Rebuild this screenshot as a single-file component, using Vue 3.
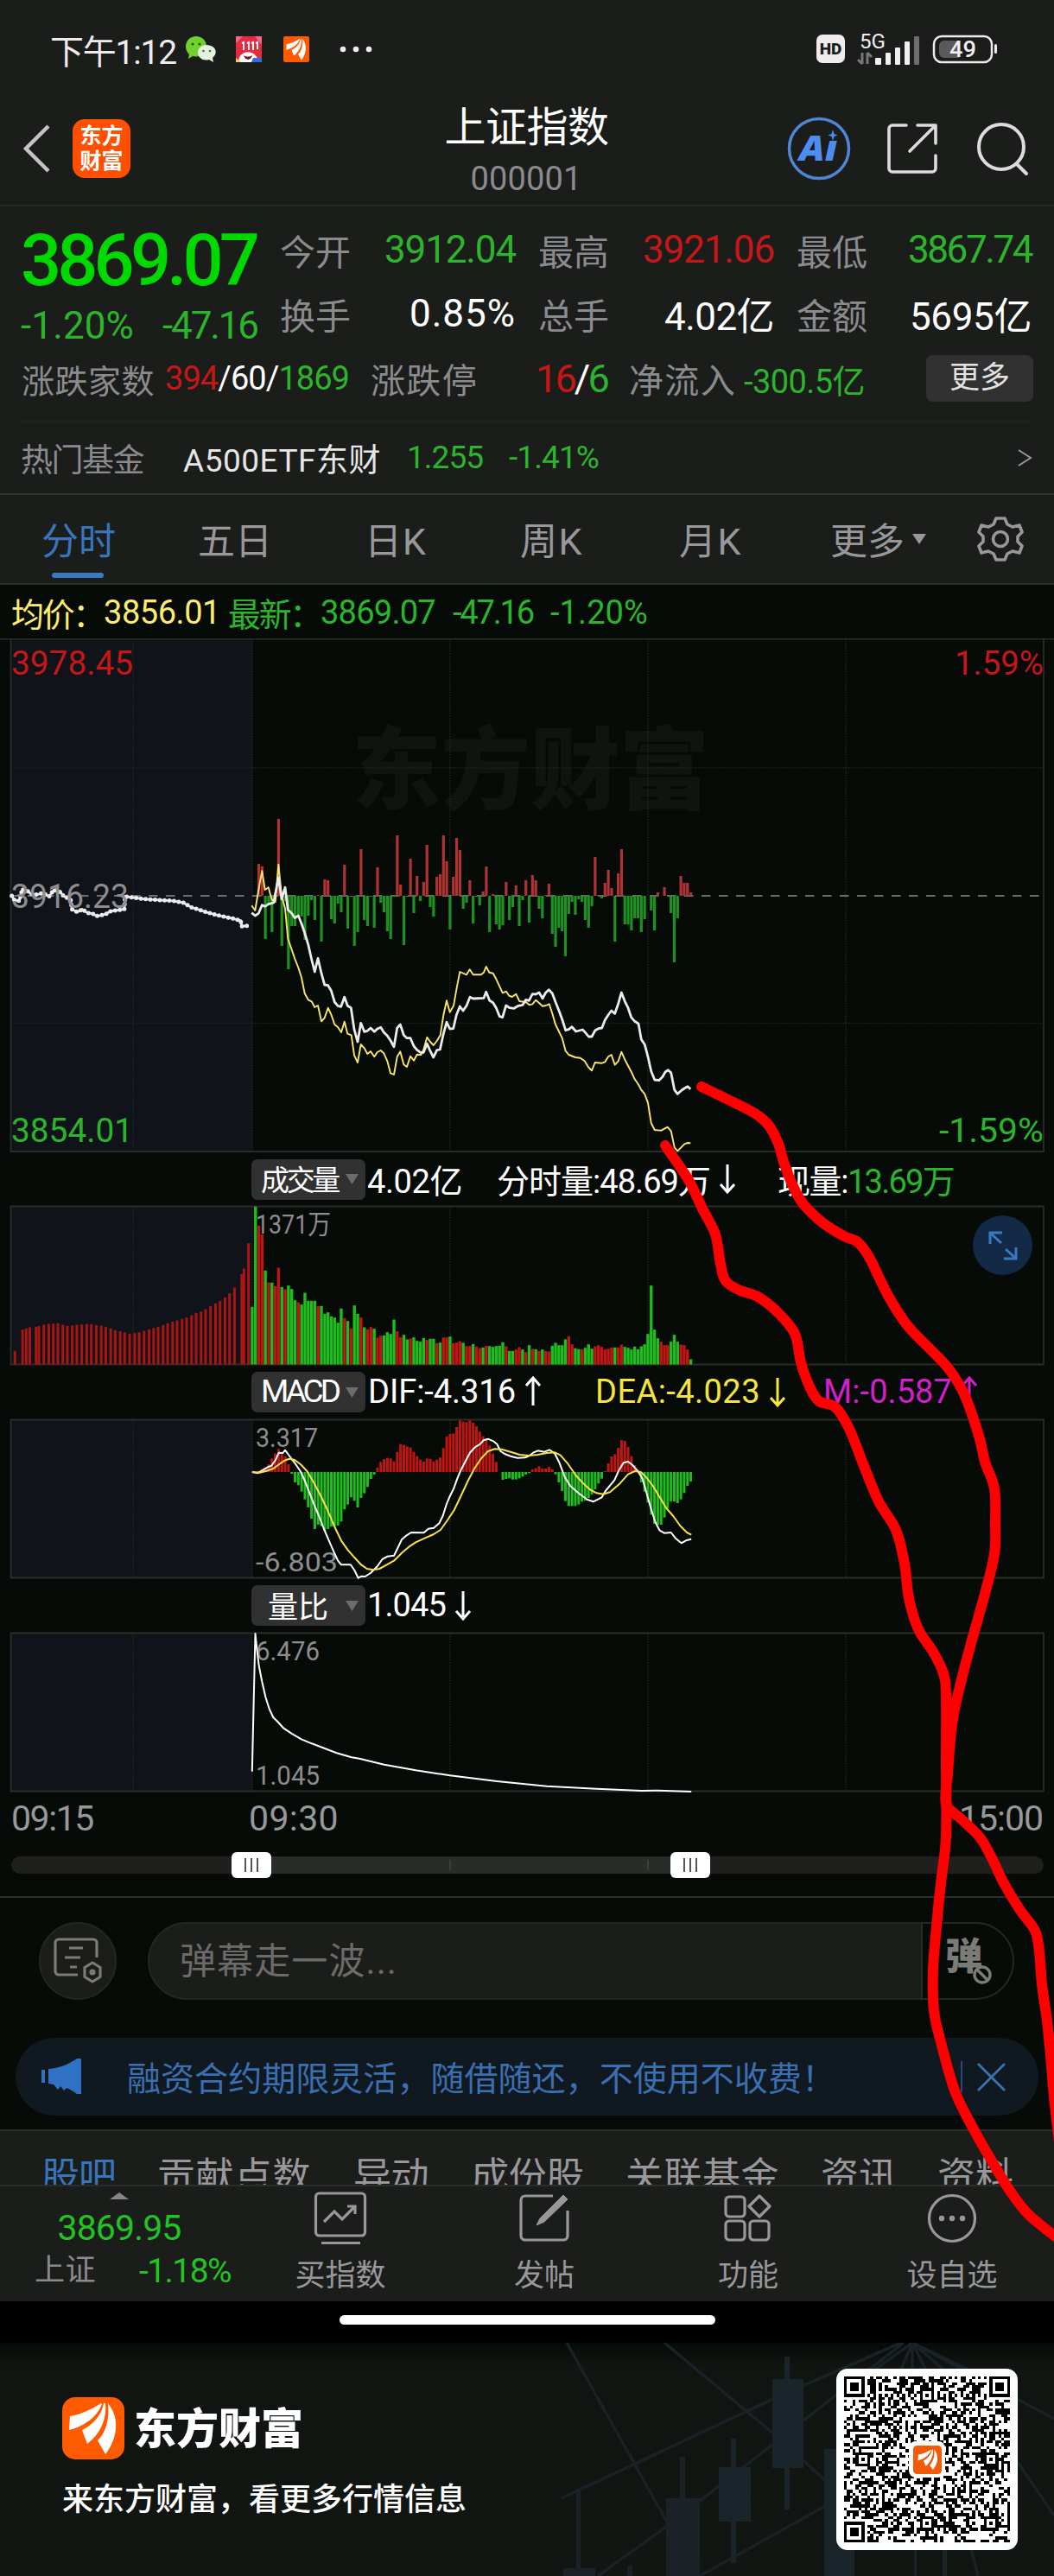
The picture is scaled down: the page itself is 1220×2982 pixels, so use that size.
<script setup>
const vFit = {
  mounted(el, { value }) {
    const width = el.getBoundingClientRect().width
    const count = [...el.textContent.trim()].length
    el.style.letterSpacing = `${(value - width) / count}px`
  },
}

const STEP = 3.817
const OPEN_X = 292
const minuteX = (i) => OPEN_X + i * STEP

const parse = (s) => s.trim().split(/\s+/).map((p) => p.split(',').map(Number))
const place = (s, sx, sy, ox, oy) =>
  parse(s).map(([x, y]) => `${(x * sx + ox).toFixed(1)},${(y * sy + oy).toFixed(1)}`).join(' ')

// Smooth path through a list of points (Catmull-Rom to Bezier)
function smooth(s) {
  const p = parse(s)
  let d = `M${p[0][0]} ${p[0][1]}`
  for (let i = 0; i < p.length - 1; i++) {
    const a = p[i - 1] || p[i]
    const b = p[i]
    const c = p[i + 1]
    const e = p[i + 2] || c
    d += `C${b[0] + (c[0] - a[0]) / 6} ${b[1] + (c[1] - a[1]) / 6} ${c[0] - (e[0] - b[0]) / 6} ${c[1] - (e[1] - b[1]) / 6} ${c[0]} ${c[1]}`
  }
  return d
}

const flow = [
  0, 0, 37, 34, -50, -9, -42, -5, 89, -58, -6, -85, -35, -35, -24, -24, -51, -23, -5, -28,
  1, -53, 19, 18, -27, -32, -9, -19, 36, -38, -1, -58, -42, 54, -28, -35, -1, -37, 33, -8,
  -19, -41, -50, -1, 70, 13, -57, -1, 43, -20, 23, -6, 16, 59, -13, -24, 22, 25, 70, 40,
  -39, 22, 67, 53, -15, -8, 18, -32, -1, -11, 5, 34, -42, 2, -33, -39, -34, 16, -28, -13,
  12, -35, -5, 18, -31, 24, 18, -15, -26, 1, 14, -44, -59, -37, -41, -70, -21, -7, -22, -4,
  -7, -28, -37, -12, 45, 1, -3, 15, 30, 9, -53, 26, 54, -33, -33, -40, -26, -26, -42, -27,
  0, -17, -40, 4, 0, 10, 0, -20, -77, -26, 23, 15, 15, 4,
]

const preLine = place(
  '35,848 43,860 58,862 66,830 80,833 90,842 110,845 128,840 146,850 160,832 180,838 190,850 210,858 214,885 230,893 245,885 260,895 275,897 287,904 300,902 315,898 330,890 345,888 370,885 372,850 390,852 430,857 480,860 515,862 545,867 570,880 615,893 650,902 690,910 716,916 719,932 740,930',
  0.389, 0.4209, 0, 680)
const T = 1 / 3
const priceLine = place(
  '34,230 46,240 58,232 70,203 80,208 92,200 110,195 127,108 138,182 150,142 160,220 172,230 184,248 196,240 208,270 218,300 230,340 242,392 253,435 264,388 276,440 287,480 299,482 310,500 322,540 333,553 344,556 356,523 367,553 379,560 390,635 402,678 413,613 425,643 436,640 447,630 460,643 470,633 482,628 493,645 505,657 517,675 528,695 539,630 550,618 562,655 573,665 585,665 597,693 608,706 620,715 631,715 643,685 654,710 665,732 677,707 688,705 700,650 711,610 722,633 734,632 745,585 757,555 768,570 780,553 792,523 803,528 840,526',
  T, T, 280, 980) + ' ' + place(
  '68,625 80,655 92,662 103,680 115,710 125,713 137,672 150,680 165,682 180,673 195,670 206,652 217,655 229,632 240,633 252,627 264,647 275,627 286,617 298,630 309,660 321,690 332,720 344,758 355,755 366,746 380,762 403,756 412,765 424,780 435,780 447,758 458,752 470,750 481,722 492,705 503,690 515,700 527,665 538,627 550,658 561,680 572,713 584,727 597,735 607,790 619,808 630,850 641,900 653,930 668,932 680,920 690,903 700,896 710,905 722,965 733,979 745,968 756,960 768,953 778,962',
  T, T, 540, 940)
const avgLine = place(
  '34,205 46,222 58,150 70,85 80,150 92,142 104,185 116,192 127,62 138,170 150,215 160,320 172,355 184,390 196,420 207,455 218,510 230,532 242,538 253,558 264,552 276,607 287,595 299,560 310,583 322,618 333,627 345,645 356,608 367,650 380,655 390,725 402,750 413,687 425,700 436,720 447,711 460,730 470,714 482,708 493,718 505,745 516,787 528,792 539,730 550,712 562,757 573,765 585,728 597,743 608,722 622,723 631,705 643,662 654,678 665,690 677,675 689,655 700,585 711,535 722,575 735,553 746,490 757,435 780,445 791,427 803,445 830,445 840,437',
  T, T, 280, 980) + ' ' + place(
  '68,537 79,557 92,560 103,580 125,628 138,623 148,638 158,642 172,632 184,657 206,660 218,670 229,667 241,653 252,663 264,674 276,672 287,667 298,700 309,738 332,785 344,830 355,843 378,852 395,854 410,865 424,887 435,898 446,870 470,872 481,868 492,850 503,843 515,878 527,865 538,833 550,860 572,902 584,928 596,945 607,965 619,980 630,1010 641,1080 653,1104 676,1106 698,1094 710,1108 722,1165 733,1177 745,1165 757,1153 768,1149 778,1150',
  T, T, 540, 940)

const preVolume = parse(
  '33,703 50,628 58,624 66,620 80,618 86,616 97,611 108,608 118,607 128,606 139,611 149,615 160,614 170,611 181,610 192,609 202,609 213,612 224,615 234,618 245,624 255,630 266,634 276,638 287,642 298,640 308,637 319,632 330,627 340,622 350,618 361,612 371,606 382,600 392,596 403,591 413,586 424,578 434,570 445,565 455,557 466,547 477,537 487,528 498,516 508,502 519,482 535,435 540,416 550,328',
).map(([x, y]) => ({ x: x * 0.523, h: (749 - y) / 3 }))

const volume = `549g 201g 267r 297r 423g 464r 465g 477r 413r 480g 488r 475g 487g 526g 533r 541g 500g 528g 528g 528g
547r 546g 573g 568g 582g 586g 604g 555g 588r 598g 624r 544g 573g 586r 620g 627r 619r 625g 656r 649r
648g 637g 643g 593g 634r 655r 646g 662g 659r 655g 667g 670g 657g 664r 660g 660g 675r 673g 655r 655r
652g 675r 673r 668r 674g 685r 685r 678g 687r 692r 690g 684r 685g 688g 685g 684g 672g 686r 702g 702g
697r 689r 697g 706r 682g 695r 696g 702r 697g 702r 704r 684g 674g 682g 682g 662g 651r 679r 693g 696g
696r 691g 679g 694g 686r 682r 688r 697r 694r 690r 690g 690r 680r 688g 691g 697g 687g 696g 686g 679g
643g 475g 628g 658g 670r 682r 682r 670g 646g 670g 680r 682r 697r 731g`
  .split(/\s+/)
  .map((v) => ({ h: (749 - parseInt(v)) / 3, up: v.endsWith('r') }))

const macd = `1122 1121 1118 1112 1105 1095 1075 1058 1042 1055 1068 1095 1128 1158 1168 1190 1217 1245 1284 1320
1305 1310 1325 1320 1312 1310 1308 1294 1252 1235 1210 1222 1245 1212 1196 1174 1146 1131 1107 1087
1077 1073 1075 1085 1052 1025 1028 1033 1037 1052 1067 1079 1086 1075 1076 1086 1079 1072 1039 999
990 988 966 943 947 949 943 951 963 982 998 1010 1030 1058 1087 1122 1149 1146 1144 1148
1148 1144 1138 1131 1126 1113 1109 1102 1109 1110 1104 1112 1130 1158 1188 1223 1240 1240 1240 1235
1225 1222 1212 1200 1182 1162 1145 1119 1092 1068 1060 1038 1011 1014 1035 1067 1098 1115 1158 1190
1228 1270 1302 1305 1305 1280 1248 1225 1225 1230 1217 1195 1170 1155`
  .split(/\s+/)
  .map((v) => (1122 - v) / 3)

const difLine = place(
  '558,1122 570,1126 580,1117 593,1105 601,1100 610,1080 617,1055 626,1056 631,1046 640,1065 652,1090 665,1120 674,1150 684,1190 695,1235 706,1275 717,1320 728,1360 739,1400 748,1430 755,1444 776,1444 784,1462 793,1490 800,1484 808,1485 820,1473 835,1450 846,1425 858,1415 872,1412 882,1380 889,1357 900,1342 910,1332 938,1333 948,1319 960,1316 972,1300 980,1275 988,1235 996,1205 1004,1180 1012,1145 1020,1115 1030,1085 1040,1055 1052,1035 1063,1025 1070,1012 1080,1007 1092,1015 1100,1025 1108,1050 1118,1060 1130,1067 1145,1073 1162,1072 1172,1065 1180,1055 1190,1048 1205,1052 1216,1045 1228,1058 1238,1090 1250,1140 1262,1170 1280,1195 1300,1218 1313,1225 1332,1210 1340,1188 1360,1150 1370,1115 1380,1090 1390,1086 1400,1098 1412,1120 1422,1145 1432,1200 1440,1245 1450,1295 1460,1325 1470,1334 1485,1332 1495,1352 1508,1369 1518,1360 1530,1355',
  0.523, T, 0, 1330)
const deaLine = place(
  '558,1122 575,1124 590,1118 605,1110 618,1095 630,1082 640,1076 652,1080 665,1095 680,1120 695,1160 710,1205 725,1255 740,1310 755,1360 770,1393 785,1420 800,1445 812,1458 826,1462 840,1458 855,1445 872,1430 890,1402 905,1382 920,1366 940,1352 960,1338 975,1323 990,1290 1005,1255 1020,1205 1035,1155 1050,1110 1065,1075 1080,1050 1095,1042 1110,1043 1130,1052 1150,1062 1170,1065 1190,1062 1210,1056 1228,1054 1240,1063 1255,1090 1275,1135 1290,1160 1305,1182 1320,1195 1335,1199 1350,1192 1370,1165 1390,1130 1405,1119 1418,1122 1430,1140 1445,1170 1460,1210 1475,1248 1490,1275 1505,1308 1520,1332 1530,1340',
  0.523, T, 0, 1330)
const ratioLine = place(
  '558,692 565,213 568,260 573,325 580,380 588,435 596,475 605,505 615,520 628,542 645,560 667,580 690,595 715,610 745,628 778,643 795,647 850,668 920,688 996,706 1100,726 1210,743 1320,752 1420,759 1450,758 1530,762',
  0.523, T, 0, 1820)

const gridX = [154, 292, 521, 750, 979]

const strokes = [
  '812,1258 843,1273 874,1289 890,1303 901,1324 907,1345 917,1371 930,1394 953,1416 977,1431 993,1438 1007,1457 1027,1498 1050,1534 1080,1565 1100,1587 1117,1616 1133,1662 1140,1692 1151,1723 1152,1764 1151,1799 1140,1845 1120,1917 1105,1978 1100,2014 1097,2054 1095,2088 1113,2106 1135,2128 1150,2155 1162,2180 1180,2210 1198,2235 1203,2260 1206,2297 1212,2340 1216,2380 1220,2427 1226,2480',
  '770,1326 797,1366 813,1399 828,1429 834,1463 840,1483 857,1494 877,1501 900,1519 920,1544 927,1577 937,1605 948,1622 967,1629 983,1654 1000,1697 1017,1738 1037,1771 1047,1810 1052,1850 1063,1886 1080,1912 1092,1937 1095,1963 1095,2040 1095,2126 1089,2180 1084,2230 1080,2280 1081,2327 1088,2360 1105,2420 1126,2463 1147,2500 1167,2533 1190,2563 1228,2594',
].map(smooth)

const quoteRows = [
  [
    { label: '今开', value: '3912.04', w: 152, tone: 'down' },
    { label: '最高', value: '3921.06', w: 152, tone: 'up' },
    { label: '最低', value: '3867.74', w: 143, tone: 'down' },
  ],
  [
    { label: '换手', value: '0.85%', w: 123, tone: 'plain' },
    { label: '总手', value: '4.02亿', w: 127, tone: 'plain' },
    { label: '金额', value: '5695亿', w: 141, tone: 'plain' },
  ],
]

const periods = [
  { text: '分时', x: 48, w: 86, on: true },
  { text: '五日', x: 229, w: 86 },
  { text: '日K', x: 422, w: 72 },
  { text: '周K', x: 602, w: 73 },
  { text: '月K', x: 786, w: 73 },
  { text: '更多', x: 961, w: 86 },
]
const gapBefore = (list, i) => list[i].x - (i ? list[i - 1].x + list[i - 1].w : 0)

const sections = [
  { text: '股吧', x: 48, w: 86, on: true },
  { text: '贡献点数', x: 182, w: 178 },
  { text: '异动', x: 409, w: 87 },
  { text: '成份股', x: 545, w: 131 },
  { text: '关联基金', x: 724, w: 178 },
  { text: '资讯', x: 950, w: 88 },
  { text: '资料', x: 1085, w: 88 },
]

const headVolume = [
  { text: '4.02亿', x: 425, w: 110 },
  { text: '分时量:48.69万', x: 575, w: 247, arrow: 'down' },
  { text: '现量:', x: 900, w: 81 },
  { text: '13.69万', x: 981, w: 123, tone: '#2cb52c' },
]
const headMacd = [
  { text: 'DIF:-4.316', x: 426, w: 171, arrow: 'up' },
  { text: 'DEA:-4.023', x: 689, w: 191, arrow: 'down', tone: '#f6e53c' },
  { text: 'M:-0.587', x: 953, w: 149, arrow: 'up', tone: '#d21fc9' },
]
const headRatio = [{ text: '1.045', x: 425, w: 91, arrow: 'down' }]
const headGap = (list, i) => {
  const prev = list[i - 1]
  return list[i].x - (prev ? prev.x + prev.w + (prev.arrow ? 30 : 0) : 423)
}

// QR symbol, 57 x 57 modules
const N = 57
const qr = (() => {
  let seed = 20251121
  const rnd = () => {
    seed = (seed * 1103515245 + 12345) % 2147483648
    return seed / 2147483648
  }
  const m = Array.from({ length: N }, () => Array.from({ length: N }, () => rnd() > 0.5))
  const ring = (cx, cy, r, keep) => {
    for (let y = -r; y <= r; y++)
      for (let x = -r; x <= r; x++) {
        const X = cx + x
        const Y = cy + y
        if (X < 0 || Y < 0 || X >= N || Y >= N) continue
        m[Y][X] = keep(Math.max(Math.abs(x), Math.abs(y)))
      }
  }
  for (let i = 8; i < N - 8; i++) m[6][i] = m[i][6] = i % 2 === 0
  for (const [x, y] of [[3, 3], [53, 3], [3, 53]]) ring(x, y, 4, (d) => d === 3 || d < 2)
  for (const [x, y] of [[28, 6], [6, 28], [50, 28], [28, 50], [50, 50]]) ring(x, y, 2, (d) => d !== 1)
  let d = ''
  m.forEach((row, y) => row.forEach((on, x) => { if (on) d += `M${x} ${y}h1v1h-1z` }))
  return d
})()
</script>

<template>
  <div class="page">
    <header class="status">
      <span class="clock" v-fit="146">下午1:12</span>
      <svg class="wechat" width="36" height="32" viewBox="0 0 36 32">
        <path d="M12 1C5 1 0 6 0 13c0 4 2 7 4 9l-1 5 5-3c8 2 16-3 16-11C24 6 19 1 12 1z" fill="#6fd32b" />
        <circle cx="8" cy="10" r="1.6" fill="#24570c" /><circle cx="16" cy="10" r="1.6" fill="#24570c" />
        <path d="M24 11c-6 0-10 4-10 9 0 6 6 10 13 8l5 3-1-5c8-7 2-15-7-15z" fill="#e4f3dd" />
        <circle cx="20.500" cy="18" r="1.300" fill="#476b3a" /><circle cx="28" cy="18" r="1.300" fill="#476b3a" />
      </svg>
      <svg class="mall" width="30" height="30" viewBox="0 0 30 30">
        <rect width="30" height="30" rx="3" fill="#e72a3e" />
        <path d="M0 8 8 0H0zM22 0l8 10V0z" fill="#f4668a" />
        <path d="M7 8l2-1v9M13 8l2-1v9M18 8l2-1v9M23 8l2-1v8" stroke="#fff" stroke-width="2" fill="none" />
        <path d="M3 30C3 15 24 14 26 30z" fill="#fff" />
        <path d="M9 22c3 2 7 2 10 0-1 6-8 7-10 0z" fill="#7d1219" />
        <path d="M20 25h10v5H18z" fill="#2d6fe0" /><path d="M0 25l6 5H0z" fill="#ffc93b" />
      </svg>
      <svg class="em" width="30" height="30" viewBox="0 0 72 72">
        <rect width="72" height="72" rx="5" fill="#ff5a00" />
        <g fill="#fff"><path d="M45 7C34 14 22 20 9 22L8 38C24 34 40 24 46 8Z" /><path d="M48 7C46 20 36 32 23 38l6 16C42 44 52 28 50 7Z" /><path d="M53 7c2 19-3 35-12 43l9 16C60 54 70 28 53 7Z" /></g>
      </svg>
      <svg class="dots" width="38" height="8"><circle v-for="x in [4, 19, 34]" :key="x" :cx="x" cy="4" r="3.300" fill="#eee" /></svg>
      <span class="hd">HD</span>
      <svg class="signal" width="74" height="54" viewBox="992 29 74 54">
        <text x="995" y="55" font-size="24" textLength="30" lengthAdjust="spacingAndGlyphs" fill="#eee">5G</text>
        <path d="M998 60v13M998 73l-5-5M1004 73V60M1004 60l5 5" stroke="#777" stroke-width="3" fill="none" />
        <g fill="#f2eff2"><rect x="1013" y="66" width="7" height="8" rx="1" /><rect x="1025" y="60" width="6" height="14" rx="1" /><rect x="1036" y="54" width="6" height="20" rx="1" /><rect x="1047" y="47" width="6" height="27" rx="1" /></g>
        <rect x="1058" y="41" width="6" height="33" rx="1" fill="#6d6d6d" />
      </svg>
      <svg class="battery" width="76" height="34" viewBox="1079 40 76 34">
        <rect x="1081" y="42" width="67" height="30" rx="9" fill="none" stroke="#eeeaee" stroke-width="2.500" />
        <path d="M1093 47h17v20h-17a6 6 0 0 1-6-6v-8a6 6 0 0 1 6-6z" fill="#5a5a5a" />
        <rect x="1151" y="51" width="3" height="11" rx="1.500" fill="#eeeaee" />
        <text x="1099" y="66" font-size="26" font-weight="500" textLength="31" lengthAdjust="spacingAndGlyphs" fill="#f2eff2">49</text>
      </svg>
    </header>

    <nav class="topbar">
      <div class="side">
        <svg width="34" height="58" viewBox="0 0 34 58"><path d="M30 3 4 29l26 26" fill="none" stroke="#c4c4c4" stroke-width="4.500" /></svg>
        <div class="brand"><span>东方</span><span>财富</span></div>
      </div>
      <div class="title">
        <strong v-fit="190">上证指数</strong>
        <span v-fit="129">000001</span>
      </div>
      <div class="side actions">
        <svg width="74" height="74" viewBox="0 0 74 74">
          <circle cx="37" cy="37" r="34.500" fill="none" stroke="#4f86d6" stroke-width="3.500" />
          <text class="ai" x="14" y="51" font-size="40" textLength="44" lengthAdjust="spacingAndGlyphs" fill="#4f8cf0">Aı</text>
          <path d="M53 15l1.500 5 4 1.500-4 1.500-1.500 5-1.500-5-4-1.500 4-1.500z" fill="#4f8cf0" />
        </svg>
        <svg class="share" width="60" height="60" viewBox="0 0 60 60" fill="none" stroke="#dcdcdc" stroke-width="3.600" stroke-linecap="round" stroke-linejoin="round">
          <path d="M23 3H7a4 4 0 0 0-4 4v46a4 4 0 0 0 4 4h46a4 4 0 0 0 4-4V38M36 3h21v21M56 4 27 33" />
        </svg>
        <svg width="62" height="64" viewBox="0 0 62 64" fill="none" stroke="#dcdcdc" stroke-width="4" stroke-linecap="round">
          <circle cx="29" cy="30" r="26" /><path d="M47 50l11 11" />
        </svg>
      </div>
    </nav>

    <section class="quote">
      <div class="summary">
        <div class="last">
          <b class="down" v-fit="272">3869.07</b>
          <div class="change"><span v-fit="131">-1.20%</span><span v-fit="110">-47.16</span></div>
        </div>
        <div class="stats">
          <div v-for="(row, r) in quoteRows" :key="r" class="stat-row">
            <div v-for="c in row" :key="c.label" class="stat">
              <span class="label">{{ c.label }}</span>
              <span v-fit="c.w" :class="c.tone">{{ c.value }}</span>
            </div>
          </div>
        </div>
      </div>
      <div class="breadth">
        <span class="label b1" v-fit="154">涨跌家数</span>
        <span class="counts" v-fit="213"><i class="up">394</i>/60/<i class="down">1869</i></span>
        <span class="label b2" v-fit="124">涨跌停</span>
        <span class="limits" v-fit="83"><i class="up">16</i>/<i class="down">6</i></span>
        <span class="label b2" v-fit="124">净流入</span>
        <span class="down inflow" v-fit="140">-300.5亿</span>
        <button class="more">更多</button>
      </div>
      <div class="fund">
        <span class="label" v-fit="142">热门基金</span>
        <span class="name" v-fit="229">A500ETF东财</span>
        <span class="down f1" v-fit="88">1.255</span>
        <span class="down f2" v-fit="104">-1.41%</span>
        <svg width="20" height="22" viewBox="0 0 20 22"><path d="M3 2l14 9-14 9" fill="none" stroke="#98989c" stroke-width="2" /></svg>
      </div>
    </section>

    <nav class="periods">
      <span v-for="(p, i) in periods" :key="p.text" v-fit="p.w" :class="['tab', { on: p.on }]" :style="{ marginLeft: gapBefore(periods, i) + 'px' }">{{ p.text }}</span>
      <svg class="caret" width="18" height="14"><path d="M1 1h16L9 13z" fill="#98989c" /></svg>
      <svg class="gear" width="54" height="54" viewBox="-27 -27 54 54" fill="none" stroke="#98989c" stroke-width="3.600" stroke-linejoin="round">
        <path d="M-5-24H5L8-17 14-14 22-16 25-8 20-3V3L25 8 22 16 14 14 8 17 5 24H-5L-8 17-14 14-22 16-25 8-20 3V-3L-25-8-22-16-14-14-8-17Z" />
        <circle r="8.500" />
      </svg>
    </nav>

    <div class="info">
      <span class="yel" v-fit="107">均价：</span><span class="yel" v-fit="135">3856.01</span>
      <span class="grn g1" v-fit="107">最新：</span><span class="grn" v-fit="133">3869.07</span>
      <span class="grn g2" v-fit="93">-47.16</span><span class="grn g2" v-fit="113">-1.20%</span>
    </div>

    <svg class="panel" width="1220" height="596" viewBox="0 739 1220 596">
      <rect x="12" y="740" width="280" height="593" fill="#10141a" />
      <text x="407" y="929" class="mark" font-size="104" textLength="414">东方财富</text>
      <g class="grid">
        <line v-for="x in gridX" :key="x" :x1="x" :x2="x" y1="741" y2="1332" />
        <line x1="13" x2="1207" y1="889" y2="889" /><line x1="13" x2="1207" y1="1184.500" y2="1184.500" />
      </g>
      <line x1="12" x2="1208" y1="1037" y2="1037" stroke="#8b8d8b" stroke-width="1.600" stroke-dasharray="10.500 9.500" />
      <path d="M0 739.500H1220" class="edge" /><path d="M12.500 740V1333H1208V740" class="edge" />
      <rect v-for="(v, i) in flow" :key="i" :x="minuteX(i) - 1.700" :y="v > 0 ? 1037 - v : 1037" width="3.200" :height="Math.abs(v)" :fill="v > 0 ? '#ad3433' : '#218f22'" />
      <polyline :points="avgLine" fill="none" stroke="#fbe66c" stroke-width="1.900" stroke-linejoin="round" />
      <polyline :points="priceLine" fill="none" stroke="#ececee" stroke-width="2.800" stroke-linejoin="round" />
      <polyline :points="preLine" fill="none" stroke="#ececee" stroke-width="2.600" />
      <polyline :points="preLine" fill="none" stroke="#ececee" stroke-width="5" stroke-linecap="round" stroke-dasharray="0 5.500" />
      <g font-size="39">
        <text x="13" y="781" fill="#c41717" textLength="141" lengthAdjust="spacingAndGlyphs">3978.45</text>
        <text x="13" y="1051" fill="#8d8d91" textLength="136" lengthAdjust="spacingAndGlyphs">3916.23</text>
        <text x="13" y="1322" fill="#2cb52c" textLength="141" lengthAdjust="spacingAndGlyphs">3854.01</text>
        <text x="1105" y="781" fill="#c41717" textLength="103" lengthAdjust="spacingAndGlyphs">1.59%</text>
        <text x="1087" y="1322" fill="#2cb52c" textLength="121" lengthAdjust="spacingAndGlyphs">-1.59%</text>
      </g>
    </svg>

    <div class="indicator first">
      <span class="pick"><span v-fit="89">成交量</span><svg width="15" height="12"><path d="M0 0h15L7.500 12z" fill="#6b6c6b" /></svg></span>
      <span v-for="(t, i) in headVolume" :key="t.text" class="item" :style="{ marginLeft: headGap(headVolume, i) + 'px', color: t.tone }">
        <span v-fit="t.w">{{ t.text }}</span>
        <svg v-if="t.arrow" :class="t.arrow + '-arrow'" width="20" height="36"><path d="M10 34V2M2 11l8-9 8 9" /></svg>
      </span>
    </div>
    <div class="panel-wrap">
      <svg class="panel" width="1220" height="186" viewBox="0 1395 1220 186">
        <rect x="12" y="1396" width="280" height="184" fill="#10141a" />
        <g class="grid"><line v-for="x in gridX" :key="x" :x1="x" :x2="x" y1="1397" y2="1579" /></g>
        <path d="M12.500 1396.500H1208V1579.500H12.500Z" class="edge" />
        <rect v-for="(b, i) in preVolume" :key="i" :x="b.x - 1.500" :y="1579.500 - b.h" width="3" :height="b.h" fill="#a81512" />
        <rect v-for="(b, i) in volume" :key="'v' + i" :x="minuteX(i) - 1.800" :y="1579.500 - b.h" width="3.400" :height="b.h" :fill="b.up ? '#bd1613' : '#1fbb1f'" />
        <text x="296" y="1428" font-size="31" fill="#8d8d91" textLength="87" lengthAdjust="spacingAndGlyphs">1371万</text>
      </svg>
      <div class="expand">
        <svg width="34" height="34" viewBox="0 0 34 34" fill="none" stroke="#3a78c0" stroke-width="3"><path d="M2 15V2h14M3 3l12 11M32 19v13H18M31 31 20 21" /></svg>
      </div>
    </div>

    <div class="indicator">
      <span class="pick macd"><span v-fit="89">MACD</span><svg width="15" height="12"><path d="M0 0h15L7.500 12z" fill="#6b6c6b" /></svg></span>
      <span v-for="(t, i) in headMacd" :key="t.text" class="item" :style="{ marginLeft: headGap(headMacd, i) + 'px', color: t.tone }">
        <span v-fit="t.w">{{ t.text }}</span>
        <svg v-if="t.arrow" :class="t.arrow + '-arrow'" width="20" height="36"><path d="M10 34V2M2 11l8-9 8 9" /></svg>
      </span>
    </div>
    <svg class="panel" width="1220" height="186" viewBox="0 1642 1220 186">
      <rect x="12" y="1643" width="280" height="184" fill="#10141a" />
      <g class="grid"><line v-for="x in gridX" :key="x" :x1="x" :x2="x" y1="1644" y2="1826" /></g>
      <path d="M12.500 1643.500H1208V1826.500H12.500Z" class="edge" />
      <rect v-for="(v, i) in macd" :key="i" :x="minuteX(i) - 1.600" :y="v > 0 ? 1704 - v : 1704" width="3" :height="Math.abs(v)" :fill="v > 0 ? '#bd1613' : '#1fbb1f'" />
      <g font-size="31" fill="#8d8d91">
        <text x="296" y="1675" textLength="72" lengthAdjust="spacingAndGlyphs">3.317</text>
        <text x="296" y="1819" textLength="95" lengthAdjust="spacingAndGlyphs">-6.803</text>
      </g>
      <polyline :points="difLine" fill="none" stroke="#fff" stroke-width="2" stroke-linejoin="round" />
      <polyline :points="deaLine" fill="none" stroke="#f8e14a" stroke-width="2" stroke-linejoin="round" />
    </svg>

    <div class="indicator">
      <span class="pick ratio"><span v-fit="70">量比</span><svg width="15" height="12"><path d="M0 0h15L7.500 12z" fill="#6b6c6b" /></svg></span>
      <span v-for="(t, i) in headRatio" :key="t.text" class="item" :style="{ marginLeft: headGap(headRatio, i) + 'px', color: t.tone }">
        <span v-fit="t.w">{{ t.text }}</span>
        <svg v-if="t.arrow" :class="t.arrow + '-arrow'" width="20" height="36"><path d="M10 34V2M2 11l8-9 8 9" /></svg>
      </span>
    </div>
    <svg class="panel" width="1220" height="186" viewBox="0 1889 1220 186">
      <rect x="12" y="1890" width="280" height="184" fill="#10141a" />
      <g class="grid"><line v-for="x in gridX" :key="x" :x1="x" :x2="x" y1="1891" y2="2073" /></g>
      <path d="M12.500 1890.500H1208V2073.500H12.500Z" class="edge" />
      <g font-size="31" fill="#8d8d91">
        <text x="296" y="1922" textLength="74" lengthAdjust="spacingAndGlyphs">6.476</text>
        <text x="296" y="2066" textLength="74" lengthAdjust="spacingAndGlyphs">1.045</text>
      </g>
      <polyline :points="ratioLine" fill="none" stroke="#fff" stroke-width="2" stroke-linejoin="round" />
    </svg>

    <div class="axis">
      <span v-fit="95">09:15</span><span class="t2" v-fit="104">09:30</span><span class="t3" v-fit="97">15:00</span>
    </div>
    <svg class="slider" width="1220" height="60" viewBox="0 2135 1220 60">
      <rect x="13" y="2149" width="1195" height="20" rx="10" fill="#1f201e" />
      <rect x="291" y="2149" width="508" height="20" fill="#292d2a" />
      <path d="M521 2153v12M750 2153v12" stroke="#3b3e3b" stroke-width="2" />
      <g v-for="x in [268, 776]" :key="x">
        <rect :x="x" y="2144" width="46" height="30" rx="6" fill="#fff" />
        <path :d="`M${x + 16} 2151v16m7-16v16m7-16v16`" stroke="#555" stroke-width="2" />
      </g>
    </svg>

    <section class="danmu">
      <div class="round">
        <svg width="58" height="54" viewBox="0 0 58 54" fill="none" stroke="#7b7b78" stroke-width="3.200">
          <path d="M29 43H7a4 4 0 0 1-4-4V6a4 4 0 0 1 4-4h40a4 4 0 0 1 4 4v17M19 12h16M14 23h18M20 34h8" />
          <path d="M46 29l9 5.500v11L46 51l-9-5.500v-11z" stroke-linejoin="round" /><circle cx="46" cy="40" r="2" />
        </svg>
      </div>
      <div class="field">
        <span class="hint" v-fit="252">弹幕走一波...</span>
        <div class="toggle">
          <b>弹</b>
          <svg width="24" height="24" viewBox="0 0 24 24"><circle cx="12" cy="12" r="9" fill="#070b07" stroke="#7b7b78" stroke-width="3.500" /><path d="M6 6l12 12" stroke="#7b7b78" stroke-width="3.500" /></svg>
        </div>
      </div>
    </section>

    <section class="notice">
      <svg width="47" height="42" viewBox="0 0 47 42" fill="#2f72c4"><path d="M0 13h4v15H0zM8 12C22 11 32 6 41 0h5v41h-5c-4-3-9-6-12-7l-3 3-4-5-3 4-5-6-6-1z" /></svg>
      <span v-fit="820">融资合约期限灵活，随借随还，不使用不收费！</span>
      <i></i>
      <svg width="33" height="33" viewBox="0 0 33 33"><path d="M1 1l31 31M32 1 1 32" stroke="#3a72b4" stroke-width="2.800" /></svg>
    </section>

    <div class="sections">
      <span v-for="(p, i) in sections" :key="p.text" v-fit="p.w" :class="['tab', { on: p.on }]" :style="{ marginLeft: gapBefore(sections, i) + 'px' }">{{ p.text }}</span>
    </div>

    <nav class="tabbar">
      <div class="index">
        <svg width="22" height="8"><path d="M0 8h22L11 0z" fill="#85858a" /></svg>
        <span class="down n" v-fit="143">3869.95</span>
        <div class="idx"><span class="label" v-fit="71">上证</span><span class="down" v-fit="106">-1.18%</span></div>
      </div>
      <div class="tool">
        <svg width="62" height="62" viewBox="0 0 62 62"><rect x="2.500" y="2" width="57" height="49" rx="4" /><path d="M12 35l12-12 9 9 15-15M39 17h9v9M9 59.500h45" /></svg>
        <span>买指数</span>
      </div>
      <div class="tool">
        <svg width="62" height="62" viewBox="0 0 62 62"><path d="M41 5H9a5 5 0 0 0-5 5v41a5 5 0 0 0 5 5h44a5 5 0 0 0 5-5V22" /><path d="M22 39l4-8L53 4l5 5-27 26z" fill="#98989c" stroke-width="1" /></svg>
        <span>发帖</span>
      </div>
      <div class="tool">
        <svg width="62" height="62" viewBox="0 0 62 62"><rect x="5" y="6" width="22" height="23" rx="4" /><path d="M44 5l12 12-12 12-12-12z" stroke-linejoin="round" /><rect x="5" y="34" width="22" height="22" rx="4" /><rect x="33" y="34" width="22" height="22" rx="4" /></svg>
        <span>功能</span>
      </div>
      <div class="tool">
        <svg width="62" height="62" viewBox="0 0 62 62"><circle cx="31" cy="31" r="26.500" /><g fill="#98989c" stroke="none"><circle cx="19" cy="31" r="3.200" /><circle cx="31" cy="31" r="3.200" /><circle cx="43" cy="31" r="3.200" /></g></svg>
        <span>设自选</span>
      </div>
    </nav>

    <div class="homebar"><i></i></div>

    <footer class="promo">
      <svg class="decor" width="1220" height="270" viewBox="0 2712 1220 270">
        <g fill="none" stroke="#1a2127" stroke-width="3.500">
          <path d="M656 2712L774 2923L692 2982M774 2923L1046 2712M769 2712L895 2817L957 2873M650 2892L895 2777L1043 2712M810 2982L957 2900M1056 2712L1220 2800M1056 2712L1010 2745M1056 2712L1040 2750M1056 2712V2750M1056 2712L1075 2750M1056 2712L1100 2750M1056 2712L1135 2750M1178 2850L1220 2912M1124 2950L1132 2982" />
        </g>
        <g fill="#1a252b">
          <path d="M894 2754h36v103h-36zM908 2728h6v177h-6zM832 2856h37v63h-37zM846 2823h6v144h-6zM954 2835h35v147h-35zM1058 2950h3v32h-3zM1091 2950h5v32h-5z" />
        </g>
        <g fill="#1a2127"><path d="M771 2892h39v90h-39zM787 2844h6v50h-6zM652 2973h37v9h-37zM667 2881h5v92h-5zM726 2970h6v12h-6z" /></g>
      </svg>
      <div class="left">
        <div class="lockup">
          <svg width="72" height="72" viewBox="0 0 72 72">
            <rect width="72" height="72" rx="15" fill="#ff5a00" />
            <g fill="#fff"><path d="M45 7C34 14 22 20 9 22L8 38C24 34 40 24 46 8Z" /><path d="M48 7C46 20 36 32 23 38l6 16C42 44 52 28 50 7Z" /><path d="M53 7c2 19-3 35-12 43l9 16C60 54 70 28 53 7Z" /></g>
          </svg>
          <b v-fit="196">东方财富</b>
        </div>
        <p v-fit="468">来东方财富，看更多行情信息</p>
      </div>
      <div class="code">
        <svg width="192" height="192" viewBox="0 0 57 57" shape-rendering="crispEdges"><path :d="qr" fill="#000" /></svg>
        <span class="center">
          <svg width="33" height="33" viewBox="0 0 72 72"><rect width="72" height="72" rx="10" fill="#f05a08" /><g fill="#fff"><path d="M45 11C34 16 24 22 13 23L12 38C26 34 40 26 46 11Z" /><path d="M48 10C46 22 36 34 26 38l6 14C42 44 52 28 50 10Z" /><path d="M53 10c2 18-3 32-11 40l8 11C60 50 68 28 53 10Z" /></g></svg>
        </span>
      </div>
    </footer>

    <svg class="ink" width="1220" height="2982" viewBox="0 0 1220 2982" fill="none" stroke="#f00" stroke-width="12" stroke-linecap="round" stroke-linejoin="round">
      <path v-for="d in strokes" :key="d" :d="d" />
    </svg>
  </div>
</template>

<style>
html, body { margin: 0; background: #070b07; }
</style>

<style scoped>
* { box-sizing: border-box; }
.page {
  position: relative;
  width: 1220px;
  height: 2982px;
  overflow: hidden;
  background: #070b07;
  color: #fff;
  font-family: Roboto, "Noto Sans CJK SC", sans-serif;
}
svg { display: block; flex: none; }
span, b, strong, p { white-space: nowrap; flex: none; }
i { font-style: normal; }
.up { color: #c41717; }
.down { color: #2cb52c; }
.plain { color: #fff; }
.label { color: #8b8b8f; }

.status { display: flex; align-items: center; height: 113px; padding: 0 0 0 58px; background: #1b1d1a; }
.clock { font-size: 39px; color: #eeeaee; }
.wechat { margin-left: 11px; }
.mall { margin-left: 22px; }
.em { margin-left: 25px; }
.dots { margin-left: 35px; }
.hd { margin-left: 514px; width: 33px; height: 33px; border-radius: 7px; background: #efebef; color: #1b1d1a; font-size: 19px; font-weight: 900; line-height: 33px; text-align: center; }
.signal { margin-left: 14px; }
.battery { margin-left: 13px; }

.topbar { display: flex; justify-content: space-between; height: 126px; padding: 0 28px 0 26px; background: #1b1d1a; border-bottom: 2px solid #252825; }
.side { display: flex; align-items: center; width: 300px; height: 117px; }
.brand { display: flex; flex-direction: column; align-items: center; justify-content: center; width: 67px; height: 68px; margin-left: 24px; border-radius: 14px; background: #ff4f00; font-size: 25px; font-weight: 700; line-height: 29px; }
.title { display: flex; flex-direction: column; align-items: center; }
.title strong { margin: 6px 0 0 1px; font-size: 48px; font-weight: 400; line-height: 58px; }
.title span { margin-top: 7px; font-size: 38px; font-weight: 400; line-height: 46px; color: #8b8b8f; }
.actions { justify-content: flex-end; }
.ai { font-family: "Open Sans", sans-serif; font-weight: 800; font-style: italic; }
.share { margin: 0 44px 0 41px; }

.quote { height: 334px; padding: 0 24px; background: #1b1d1a; border-bottom: 2px solid #323532; }
.summary { display: flex; height: 161px; }
.last { width: 300px; padding-top: 22px; }
.last b { display: inline-block; font-size: 83px; font-weight: 500; line-height: 82px; color: #00d900; }
.change { display: flex; justify-content: space-between; width: 274px; margin-top: 6px; font-size: 44px; line-height: 56px; color: #2cb52c; }
.stats { display: flex; flex-direction: column; flex: 1; padding-top: 13px; }
.stat-row { display: flex; gap: 26px; height: 75px; align-items: center; }
.stat { display: flex; justify-content: space-between; align-items: center; width: 273px; font-size: 44px; }
.stat .label { font-size: 41px; }
.stat:last-child { width: 272px; }
.breadth { display: flex; align-items: center; height: 76px; font-size: 38px; }
.breadth .b1 { margin-left: 1px; }
.breadth .counts { margin-left: 12px; }
.breadth .b2 { font-size: 40px; margin-left: 25px; }
.breadth .limits { margin-left: 67px; font-size: 45px; }
.breadth .inflow { margin-left: 9px; }
.more { margin-left: auto; width: 124px; height: 54px; padding: 0; border: 0; border-radius: 8px; background: #303130; color: #e2e2e2; font: 35px/54px Roboto, "Noto Sans CJK SC", sans-serif; }
.fund { display: flex; align-items: center; height: 83px; margin-top: 11px; border-top: 2px solid #20221f; font-size: 37px; }
.fund .name { margin-left: 46px; color: #e6e6e6; }
.fund .f1 { margin-left: 30px; }
.fund .f2 { margin-left: 30px; }
.fund svg { margin-left: auto; }

.periods { display: flex; align-items: center; height: 104px; background: #1b1d1a; border-bottom: 2px solid #2c2f2c; font-size: 43px; color: #98989c; }
.periods .tab { position: relative; top: -1px; }
.tab.on { color: #3875bd; }
.periods .on::after { content: ""; position: absolute; left: 12px; bottom: -15px; width: 60px; height: 6px; border-radius: 3px; background: #3a79c4; }
.caret { margin-left: 8px; }
.gear { margin-left: 58px; }

.info { display: flex; align-items: center; height: 62px; padding: 1px 0 0 13px; font-size: 38px; }
.yel { color: #fdec74; }
.grn { color: #2cb52c; }
.g1 { margin-left: 9px; }
.g2 { margin-left: 20px; }

.panel .grid line { stroke: #20231f; stroke-width: 1.6; stroke-dasharray: 1.5 1.5; }
.panel .edge { fill: none; stroke: #2a2d2a; stroke-width: 1.8; }
.mark { fill: #101410; font-family: "Noto Sans CJK SC", sans-serif; font-weight: 900; }
.panel-wrap { position: relative; }
.expand { position: absolute; top: 12px; right: 25px; display: flex; align-items: center; justify-content: center; width: 69px; height: 69px; border-radius: 50%; background: #122a45; }

.indicator { display: flex; align-items: center; height: 61px; padding-left: 291px; font-size: 38px; }
.indicator.first { height: 60px; }
.pick { display: flex; align-items: center; justify-content: space-between; width: 132px; height: 47px; padding: 0 8px 0 11px; border-radius: 7px; background: #303130; font-size: 33px; }
.pick.macd { font-size: 37px; }
.pick.ratio { padding-left: 19px; font-size: 35px; }
.pick > span, .item > span { margin-top: -2px; }
.item { display: flex; align-items: center; color: #fff; }
.item svg { margin: -2px 0 0 10px; fill: none; stroke: currentColor; stroke-width: 3; }
.down-arrow { transform: rotate(180deg); }

.axis { display: flex; align-items: center; height: 60px; padding-left: 13px; font-size: 41px; color: #98989c; }
.axis .t2 { margin-left: 180px; }
.axis .t3 { margin-left: 718px; }

.danmu { display: flex; align-items: flex-start; height: 164px; padding: 28px 0 0 45px; border-top: 2px solid #2c2f2c; }
.round { display: flex; align-items: center; justify-content: center; width: 90px; height: 90px; border-radius: 50%; border: 2px solid #242624; background: #1b1d1a; }
.field { display: flex; align-items: center; justify-content: space-between; width: 1003px; height: 90px; margin-left: 36px; padding-left: 35px; border: 2px solid #242624; border-radius: 45px; background: #1b1d1a; overflow: hidden; font-size: 42px; color: #6b6b69; }
.hint { margin-top: -8px; }
.toggle { position: relative; width: 106px; height: 86px; border-left: 2px solid #2a2c2a; background: #070b07; }
.toggle b { display: block; margin: 15px 0 0 26px; font-size: 43px; font-weight: 800; line-height: 46px; color: #7b7b78; }
.toggle svg { position: absolute; left: 57px; top: 47px; }

.notice { display: flex; align-items: center; width: 1184px; height: 90px; margin: 0 18px; padding-left: 30px; border-radius: 45px; background: #101820; font-size: 39px; color: #3a6fb0; }
.notice span { margin: -2px 0 0 52px; }
.notice i { width: 2px; height: 36px; margin: 0 17px 0 145px; background: #234a78; }

.sections { display: flex; height: 64px; margin-top: 16px; padding-top: 25px; overflow: hidden; border-top: 2px solid #2c2f2c; background: #1b1d1a; font-size: 44px; line-height: 56px; color: #98989c; }

.tabbar { display: flex; height: 135px; background: #1b1d1a; border-top: 2px solid #2a2d2a; }
.index { display: flex; flex-direction: column; align-items: center; width: 276px; padding-top: 7px; }
.index .n { margin-top: 11px; font-size: 41px; line-height: 44px; }
.index .down { color: #22c322; }
.idx { display: flex; justify-content: space-between; align-items: center; width: 227px; margin: 6px 0 0 31px; font-size: 39px; line-height: 44px; }
.idx .label { font-size: 35px; }
.tool { display: flex; flex-direction: column; align-items: center; width: 236px; padding-top: 6px; font-size: 35px; line-height: 44px; color: #98989c; }
.tool span { margin-top: 14px; }
.tool svg { fill: none; stroke: #98989c; stroke-width: 3.2; }

.homebar { display: flex; justify-content: center; height: 48px; padding-top: 16px; background: #000; }
.homebar i { width: 435px; height: 11px; border-radius: 6px; background: #fff; }

.promo { position: relative; display: flex; justify-content: space-between; height: 270px; padding: 30px 42px 0 72px; background: linear-gradient(#060b07, #111512 28px, #111612); }
.decor { position: absolute; left: 0; top: 0; }
.left { position: relative; padding-top: 33px; }
.lockup { display: flex; align-items: center; gap: 11px; }
.lockup b { margin-top: -6px; font: 900 49px/60px "Noto Sans CJK SC", sans-serif; }
.left p { display: inline-block; margin: 23px 0 0; font-size: 36px; font-weight: 500; line-height: 48px; }
.code { position: relative; display: flex; align-items: center; justify-content: center; width: 210px; height: 210px; border-radius: 13px; background: #fff; }
.center { position: absolute; display: flex; align-items: center; justify-content: center; width: 42px; height: 42px; border-radius: 8px; background: #fff; }

.ink { position: absolute; left: 0; top: 0; pointer-events: none; }
</style>
